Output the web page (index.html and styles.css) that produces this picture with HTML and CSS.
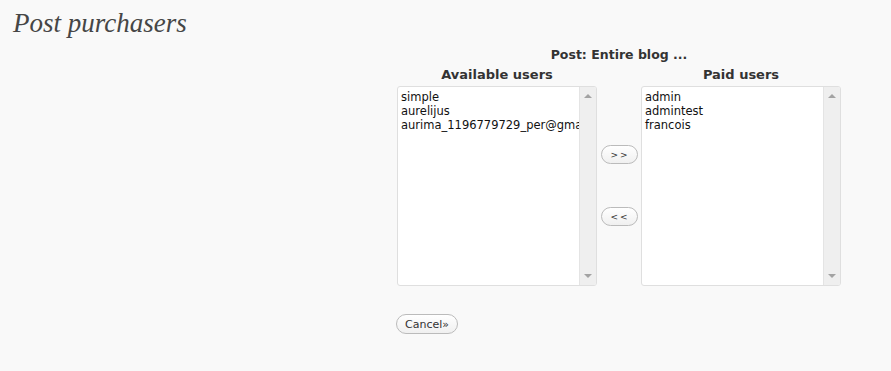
FILE: index.html
```html
<!DOCTYPE html>
<html lang="en">
  <head>
    <meta charset="UTF-8" />
    <title>Post purchasers</title>
    <link rel="stylesheet" href="styles.css">
  </head>
  <body>
    <div class="wrap">
      <h2 class="page-title">Post purchasers</h2>

      <div class="purchasers">
        <div class="post-name">Post: Entire blog ...</div>
        <div class="lists">
          <div class="col">
            <div class="col-title">Available users</div>
            <div class="listbox">
              <ul class="options">
                <li>simple</li>
                <li>aurelijus</li>
                <li>aurima_1196779729_per@gmail.com</li>
              </ul>
              <div class="scrollbar">
                <span class="arrow up"></span>
                <span class="arrow down"></span>
              </div>
            </div>
          </div>

          <div class="moves">
            <button class="move">&gt;&gt;</button>
            <button class="move">&lt;&lt;</button>
          </div>

          <div class="col">
            <div class="col-title">Paid users</div>
            <div class="listbox">
              <ul class="options">
                <li>admin</li>
                <li>admintest</li>
                <li>francois</li>
              </ul>
              <div class="scrollbar">
                <span class="arrow up"></span>
                <span class="arrow down"></span>
              </div>
            </div>
          </div>
        </div>

        <button class="cancel">Cancel&raquo;</button>
      </div>
    </div>
  </body>
</html>
```

FILE: styles.css
```css
body {
  margin: 0;
  background: #f9f9f9;
  font-family: "DejaVu Sans", Verdana, sans-serif;
  color: #333;
}

.wrap {
  padding: 0 13px;
}

.page-title {
  margin: 0;
  padding-top: 9px;
  font-family: "Liberation Serif", Georgia, serif;
  font-style: italic;
  font-weight: normal;
  font-size: 27px;
  line-height: 28px;
  color: #464646;
}

.purchasers {
  margin-left: 384px;
  width: 444px;
}

.post-name {
  margin-top: 11px;
  text-align: center;
  font-size: 12.5px;
  font-weight: bold;
  line-height: 14px;
}

.lists {
  display: flex;
  margin-top: 5px;
}

.col {
  width: 200px;
}

.col-title {
  text-align: center;
  font-size: 13px;
  font-weight: bold;
  line-height: 15px;
  margin-bottom: 4px;
}

.listbox {
  display: flex;
  height: 198px;
  background: #fff;
  border: 1px solid #dfdfdf;
  border-radius: 3px;
  overflow: hidden;
}

.options {
  flex: 1;
  margin: 0;
  padding: 3px 0 0 3px;
  list-style: none;
  font-size: 11.5px;
  line-height: 14px;
  color: #111;
  white-space: nowrap;
  overflow: hidden;
}

.scrollbar {
  width: 16px;
  background: #efefef;
  border-left: 1px solid #e4e4e4;
  display: flex;
  flex-direction: column;
  justify-content: space-between;
  align-items: center;
  padding: 7px 0;
}

.arrow {
  width: 0;
  height: 0;
  border-left: 4px solid transparent;
  border-right: 4px solid transparent;
}

.arrow.up {
  border-bottom: 4px solid #a3a3a3;
}

.arrow.down {
  border-top: 4px solid #a3a3a3;
}

.moves {
  width: 44px;
  display: flex;
  flex-direction: column;
  align-items: center;
  padding-top: 78px;
  gap: 43px;
}

button {
  font-family: "DejaVu Sans", Verdana, sans-serif;
  font-size: 11px;
  color: #333;
  background: linear-gradient(#fff, #f0f0f0);
  border: 1px solid #bbb;
  border-radius: 11px;
  cursor: pointer;
}

.move {
  width: 37px;
  height: 19px;
  padding: 0;
  font-size: 9px;
  letter-spacing: 2px;
  text-indent: 2px;
}

.cancel {
  margin-top: 28px;
  margin-left: -1px;
  height: 20px;
  padding: 0 8px;
}
```
